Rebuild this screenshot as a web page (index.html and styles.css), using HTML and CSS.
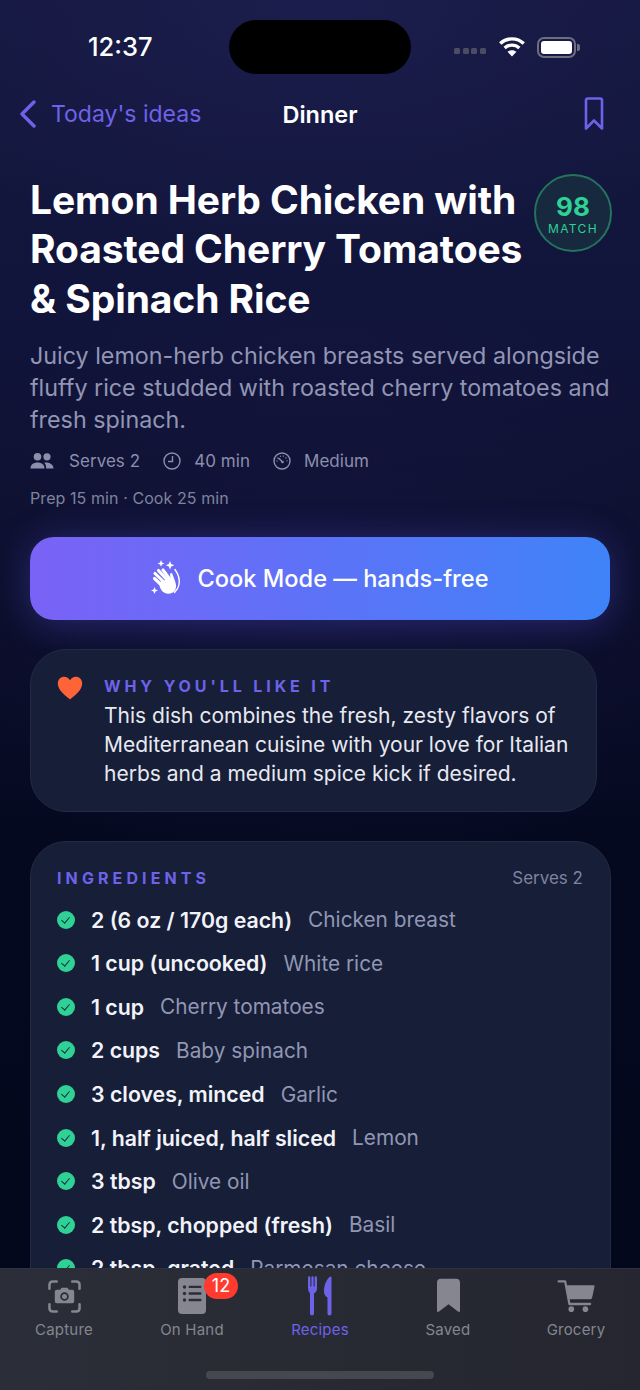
FILE: index.html
```html
<!DOCTYPE html>
<html lang="en">
<head>
    <meta charset="UTF-8">
    <meta name="viewport" content="width=device-width, initial-scale=1.0">
    <title>Dinner</title>
    <link rel="stylesheet" href="styles.css">
</head>
<body>
    <div class="phone">
        <div class="status-bar">
            <div class="status-time">12:37</div>
            <div class="island"></div>
            <div class="status-icons">
                <div class="signal"><span></span><span></span><span></span><span></span></div>
                <svg class="wifi" width="28" height="21" viewBox="0 0 26 20">
                    <path fill="none" stroke="#fff" stroke-width="3.2" d="M1.800 7.200C8 1.200 18 1.200 24.200 7.200"/>
                    <path fill="none" stroke="#fff" stroke-width="3.2" d="M6 11.400c4-3.700 10-3.700 14 0"/>
                    <path fill="#fff" d="M13 19.500l-4.200-4.400c2.400-2 6-2 8.400 0z"/>
                </svg>
                <div class="battery"><div class="battery-fill"></div></div>
            </div>
        </div>

        <div class="nav-bar">
            <div class="nav-back">
                <svg width="18" height="28" viewBox="0 0 18 28"><path fill="none" stroke="#6e62e8" stroke-width="3.400" stroke-linecap="round" stroke-linejoin="round" d="M15 2L3 14l12 12"/></svg>
                <span>Today's ideas</span>
            </div>
            <div class="nav-title">Dinner</div>
            <svg class="nav-save" width="20" height="34" viewBox="0 0 20 34"><path fill="none" stroke="#6e62e8" stroke-width="2.600" stroke-linejoin="round" d="M2 3.500Q2 1.500 4 1.500H16Q18 1.500 18 3.500V31.500L10 23.500L2 31.500Z"/></svg>
        </div>

        <div class="content">
            <div class="title-row">
                <h1>Lemon Herb Chicken with Roasted Cherry Tomatoes &amp; Spinach Rice</h1>
                <div class="match">
                    <div class="match-num">98</div>
                    <div class="match-label">MATCH</div>
                </div>
            </div>
            <p class="desc">Juicy lemon-herb chicken breasts served alongside fluffy rice studded with roasted cherry tomatoes and fresh spinach.</p>

            <div class="meta">
                <div class="meta-item meta-serves">
                    <svg width="24" height="18" viewBox="0 0 24 18" fill="#8b8fac">
                        <circle cx="7.500" cy="4.800" r="3.800"/><circle cx="17" cy="4.800" r="3.600"/>
                        <path d="M0.500 16.500c0-4 3.200-6 7-6s7 2 7 6z"/><path d="M15.500 10.500c4 0 8 1.800 8 6h-7.400c0-2.400-.2-4.200-1.900-5.700z"/>
                    </svg>
                    <span>Serves 2</span>
                </div>
                <div class="meta-item">
                    <svg width="18" height="18" viewBox="0 0 18 18" fill="none" stroke="#8b8fac" stroke-width="1.400"><circle cx="9" cy="9" r="8"/><path d="M9.500 4v5.500H5"/></svg>
                    <span>40 min</span>
                </div>
                <div class="meta-item">
                    <svg width="18" height="18" viewBox="0 0 18 18" fill="none" stroke="#8b8fac" stroke-width="1.400"><circle cx="9" cy="9" r="8"/><path d="M9 9.500L5.500 6"/><circle cx="9.500" cy="10" r="1.300" fill="#8b8fac" stroke="none"/><path stroke-dasharray="1 2" d="M4 9.500a5 5 0 0 1 5-5.500 5 5 0 0 1 5 5.500"/></svg>
                    <span>Medium</span>
                </div>
            </div>
            <div class="times">Prep 15 min · Cook 25 min</div>

            <div class="cook-btn">
                <svg width="32" height="36" viewBox="0 0 32 36" fill="#fff">
                    <path d="M10 0l1 2.400 2.400 1-2.400 1-1 2.400-1-2.400-2.400-1 2.400-1zM19 1l1.200 3 3 1.200-3 1.200-1.200 3-1.200-3-3-1.200 3-1.200zM3.500 27l1 2.500 2.500 1-2.500 1-1 2.500-1-2.500-2.500-1 2.500-1z"/>
                    <g fill="none" stroke="#fff" stroke-width="3.100" stroke-linecap="round">
                        <path d="M3.500 18.500l9 8.500"/>
                        <path d="M4 13.500l11 10.500"/>
                        <path d="M7.500 10.500l9.500 10.500"/>
                        <path d="M12 10l7 9.500"/>
                    </g>
                    <path d="M10 21c-3 3-1 9 3 11.500 3.500 2 8 1.500 10.500-1.500 2.500-3.500 1.500-7 .5-10l-3-8-2 .5.500 5.500z"/>
                    <path fill="none" stroke="#fff" stroke-width="1.400" stroke-linecap="round" d="M24 9.500c3.500 5 5 10 4 15-.5 3-2 5.500-4.500 8"/>
                </svg>
                <span>Cook Mode — hands-free</span>
            </div>

            <div class="why-card">
                <svg class="heart" width="26" height="24" viewBox="0 0 26 24"><path fill="#ff6338" d="M13 23.500C9 20 .8 14.500.8 7.500.8 3.500 3.800.8 7.200.8c2.500 0 4.500 1.300 5.800 3.400C14.300 2.100 16.300.8 18.800.8c3.400 0 6.400 2.700 6.400 6.700 0 7-8.200 12.500-12.200 16z"/></svg>
                <div class="why-body">
                    <div class="section-label why-label">WHY YOU'LL LIKE IT</div>
                    <p>This dish combines the fresh, zesty flavors of Mediterranean cuisine with your love for Italian herbs and a medium spice kick if desired.</p>
                </div>
            </div>

            <div class="ingredients-card">
                <div class="ingredients-head">
                    <div class="section-label">INGREDIENTS</div>
                    <div class="ingredients-serves">Serves 2</div>
                </div>
                <div class="ingredient"><span class="check"></span><strong>2 (6 oz / 170g each)</strong><span class="name">Chicken breast</span></div>
                <div class="ingredient"><span class="check"></span><strong>1 cup (uncooked)</strong><span class="name">White rice</span></div>
                <div class="ingredient"><span class="check"></span><strong>1 cup</strong><span class="name">Cherry tomatoes</span></div>
                <div class="ingredient"><span class="check"></span><strong>2 cups</strong><span class="name">Baby spinach</span></div>
                <div class="ingredient"><span class="check"></span><strong>3 cloves, minced</strong><span class="name">Garlic</span></div>
                <div class="ingredient"><span class="check"></span><strong>1, half juiced, half sliced</strong><span class="name">Lemon</span></div>
                <div class="ingredient"><span class="check"></span><strong>3 tbsp</strong><span class="name">Olive oil</span></div>
                <div class="ingredient"><span class="check"></span><strong>2 tbsp, chopped (fresh)</strong><span class="name">Basil</span></div>
                <div class="ingredient"><span class="check"></span><strong>2 tbsp, grated</strong><span class="name">Parmesan cheese</span></div>
            </div>
        </div>

        <div class="tab-bar">
            <div class="tab">
                <div class="tab-icon">
                    <svg width="33" height="33" viewBox="0 0 34 34" fill="none" stroke="#85868f" stroke-width="2.600" stroke-linecap="round">
                        <path d="M1.500 9V5q0-3.500 3.500-3.500h4M25 1.500h4q3.500 0 3.500 3.500v4M32.500 25v4q0 3.500-3.500 3.500h-4M9 32.500H5q-3.500 0-3.500-3.500v-4"/>
                        <path fill="#85868f" stroke="none" d="M12.500 10l1.500-2h6l1.500 2H25q2 0 2 2v10q0 2-2 2H9q-2 0-2-2V12q0-2 2-2z"/>
                        <circle cx="17" cy="17" r="3.500" fill="#85868f" stroke="#2b2d38" stroke-width="1.800"/>
                    </svg>
                </div>
                <span>Capture</span>
            </div>
            <div class="tab">
                <div class="tab-icon">
                    <svg width="28" height="36" viewBox="0 0 28 36">
                        <rect width="28" height="36" rx="4" fill="#85868f"/>
                        <g fill="#2b2d38"><circle cx="6.500" cy="9" r="1.700"/><circle cx="6.500" cy="15.500" r="1.700"/><circle cx="6.500" cy="22" r="1.700"/><rect x="10.500" y="7.700" width="13" height="2.400" rx="1"/><rect x="10.500" y="14.300" width="13" height="2.400" rx="1"/><rect x="10.500" y="20.800" width="13" height="2.400" rx="1"/></g>
                    </svg>
                    <div class="badge">12</div>
                </div>
                <span>On Hand</span>
            </div>
            <div class="tab active">
                <div class="tab-icon">
                    <svg width="24" height="40" viewBox="0 0 24 40" fill="#6e62e8">
                        <path d="M0 1.500q0-1.200 1.200-1.200t1.200 1.200V10q0 .6.500.6t.5-.6V1.500q0-1.200 1.100-1.200t1.100 1.200V10q0 .6.500.6t.5-.6V1.500q0-1.200 1.200-1.200t1.200 1.200V12q0 4-3 5.500V37.500q0 2-2 2t-2-2V17.500Q0 16 0 12z"/>
                        <path d="M23.500 1.500q0-1.500-1.200-1C18.500 3 16 9 16 15.500q0 4 3.500 6v16q0 2 2 2t2-2z"/>
                    </svg>
                </div>
                <span>Recipes</span>
            </div>
            <div class="tab">
                <div class="tab-icon">
                    <svg width="23" height="36" viewBox="0 0 24 36"><path fill="#85868f" d="M0 4Q0 0 4 0H20Q24 0 24 4V33q0 3-2.500 1L12 26.500 2.500 34Q0 36 0 33Z"/></svg>
                </div>
                <span>Saved</span>
            </div>
            <div class="tab">
                <div class="tab-icon">
                    <svg width="38" height="32" viewBox="0 0 40 34" fill="#85868f">
                        <path fill="none" stroke="#85868f" stroke-width="2.400" stroke-linecap="round" stroke-linejoin="round" d="M1.500 1.500H8.500L13 25.500H35"/>
                        <path d="M9.500 5.500H38.500q1.500 0 1.200 1.500L37 19q-.4 1.500-2 1.500H12.500z"/>
                        <circle cx="15" cy="31" r="3"/><circle cx="30" cy="31" r="3"/>
                    </svg>
                </div>
                <span>Grocery</span>
            </div>
            <div class="home-indicator"></div>
        </div>
    </div>
</body>
</html>
```
FILE: styles.css
```css
* {
    margin: 0;
    padding: 0;
    box-sizing: border-box;
}

body {
    font-family: Inter, 'Noto Sans', sans-serif;
    background: #060a20;
    color: white;
}

.phone {
    width: 640px;
    height: 1390px;
    position: relative;
    overflow: hidden;
    background:
        radial-gradient(ellipse 480px 260px at 320px 0, #1b1d4c 0%, rgba(27,29,76,0) 100%),
        radial-gradient(ellipse 420px 300px at 320px 580px, rgba(24,22,70,0.5) 0%, rgba(24,22,70,0) 100%),
        linear-gradient(180deg, #15183f 0%, #11143a 25%, #0c0f2b 42%, #050920 60%, #03071b 100%);
}

/* Status bar */
.status-bar {
    height: 90px;
    padding: 20px 60px 0 88px;
    display: flex;
    align-items: flex-start;
}

.status-time {
    width: 141px;
    font-size: 25.5px;
    font-weight: 500;
    line-height: 54px;
}

.island {
    width: 182px;
    height: 54px;
    background: black;
    border-radius: 27px;
}

.status-icons {
    margin-left: 43px;
    height: 54px;
    display: flex;
    align-items: center;
}

.signal {
    display: flex;
    gap: 2.700px;
    margin-top: 7px;
}

.signal span {
    width: 6px;
    height: 6px;
    border-radius: 1.500px;
    background: #4c4d64;
}

.wifi {
    margin-left: 12px;
    margin-top: -2px;
}

.battery {
    margin-left: 11px;
    width: 39px;
    height: 21px;
    border: 2px solid #6c6d7f;
    border-radius: 7px;
    padding: 2px;
    flex-shrink: 0;
    position: relative;
}

.battery::after {
    content: '';
    position: absolute;
    right: -6px;
    top: 5px;
    width: 3px;
    height: 7px;
    border-radius: 0 2px 2px 0;
    background: #6c6d7f;
}

.battery-fill {
    height: 100%;
    background: white;
    border-radius: 3px;
}

/* Nav bar */
.nav-bar {
    height: 48px;
    padding: 0 36px 0 19px;
    display: flex;
    align-items: center;
    position: relative;
}

.nav-back {
    display: flex;
    align-items: center;
    gap: 14px;
    color: #6e62e8;
    font-size: 23px;
}

.nav-title {
    position: absolute;
    left: 0;
    right: 0;
    text-align: center;
    font-size: 23.500px;
    font-weight: 600;
}

.nav-save {
    margin-left: auto;
}

/* Main content */
.content {
    padding: 36px 30px 0 30px;
}

.title-row {
    display: flex;
    justify-content: space-between;
    align-items: flex-start;
}

h1 {
    margin-top: 1px;
    font-size: 39px;
    line-height: 49.300px;
    font-weight: 700;
    letter-spacing: -0.100px;
    width: 504px;
    flex-shrink: 0;
}

.match {
    width: 78px;
    height: 78px;
    margin-right: -2px;
    border-radius: 50%;
    border: 2px solid #23735f;
    background: #16293f;
    display: flex;
    flex-direction: column;
    align-items: center;
    justify-content: center;
    color: #2fd195;
    flex-shrink: 0;
}

.match-num {
    font-size: 26px;
    font-weight: 700;
    line-height: 30px;
    margin-top: 1px;
}

.match-label {
    font-size: 12px;
    letter-spacing: 1.400px;
    line-height: 14px;
}

.desc {
    margin-top: 17px;
    font-size: 23.300px;
    line-height: 32px;
    color: #9296b4;
}

.meta {
    margin-top: 12px;
    display: flex;
    gap: 23px;
    align-items: center;
    height: 26px;
}

.meta-item {
    display: flex;
    align-items: center;
    gap: 13px;
    font-size: 17px;
    letter-spacing: 0.050px;
    color: #8b8fac;
}

.meta-serves {
    gap: 15px;
}

.times {
    margin-top: 14px;
    font-size: 16px;
    letter-spacing: 0.080px;
    line-height: 20px;
    color: #7f839f;
}

.cook-btn {
    margin-top: 29px;
    height: 83px;
    border-radius: 24px;
    background: linear-gradient(90deg, #7a62f6 0%, #3f83f8 100%);
    box-shadow: 0 4px 36px rgba(90,90,240,0.35);
    display: flex;
    align-items: center;
    justify-content: center;
    gap: 14px;
    font-size: 23.600px;
    font-weight: 500;
}

.why-card {
    margin-top: 29px;
    width: 567px;
    height: 163px;
    padding: 26px 26px 0 26px;
    border-radius: 36px;
    background: #161e38;
    border: 1px solid #232a44;
    display: flex;
    gap: 21px;
}

.heart {
    flex-shrink: 0;
}

.section-label {
    font-size: 16px;
    font-weight: 700;
    letter-spacing: 4.100px;
    color: #6e62e8;
    line-height: 20px;
}

.why-label {
    letter-spacing: 3.900px;
    margin-bottom: 5px;
}

.why-body p {
    font-size: 21px;
    line-height: 29px;
    color: #e8e9f0;
}

.ingredients-card {
    margin-top: 29px;
    width: 581px;
    height: 600px;
    padding: 26px 27px 0 26px;
    border-radius: 36px;
    background: #161e38;
    border: 1px solid #232a44;
}

.ingredients-head {
    display: flex;
    justify-content: space-between;
    align-items: center;
    height: 20px;
    margin-bottom: 10px;
}

.ingredients-serves {
    font-size: 17px;
    color: #7f839f;
}

.ingredient {
    height: 43.600px;
    display: flex;
    align-items: center;
    font-size: 20.800px;
}

.ingredient strong {
    font-size: 21.300px;
    font-weight: 600;
    color: #f2f3f8;
}

.ingredient .name {
    margin-left: 16px;
    color: #9296b4;
}

.check {
    width: 18px;
    height: 18px;
    border-radius: 50%;
    background: #2fd195;
    margin-right: 16px;
    position: relative;
    flex-shrink: 0;
}

.check::after {
    content: '';
    position: absolute;
    left: 6px;
    top: 4px;
    width: 4px;
    height: 7px;
    border: solid #14304a;
    border-width: 0 1.600px 1.600px 0;
    transform: rotate(40deg);
}

/* Tab bar */
.tab-bar {
    position: absolute;
    left: 0;
    right: 0;
    bottom: 0;
    height: 122px;
    padding-top: 5px;
    background: linear-gradient(90deg, #2b2e38 0%, #25262f 100%);
    border-top: 1px solid #2e3140;
    display: flex;
    justify-content: space-between;
}

.tab {
    width: 128px;
    display: flex;
    flex-direction: column;
    align-items: center;
    gap: 3px;
    font-size: 15px;
    line-height: 18px;
    letter-spacing: 0.200px;
    color: #85868f;
}

.tab.active {
    color: #6e62e8;
}

.tab-icon {
    height: 44px;
    display: flex;
    align-items: center;
    position: relative;
}

.badge {
    position: absolute;
    left: 26px;
    top: -1px;
    width: 34px;
    height: 26px;
    border-radius: 13px;
    background: #ff3b30;
    color: white;
    font-size: 18px;
    line-height: 26px;
    text-align: center;
    letter-spacing: 0;
}

.home-indicator {
    position: absolute;
    left: 206px;
    bottom: 11px;
    width: 228px;
    height: 8px;
    border-radius: 4px;
    background: #46474f;
}
```
